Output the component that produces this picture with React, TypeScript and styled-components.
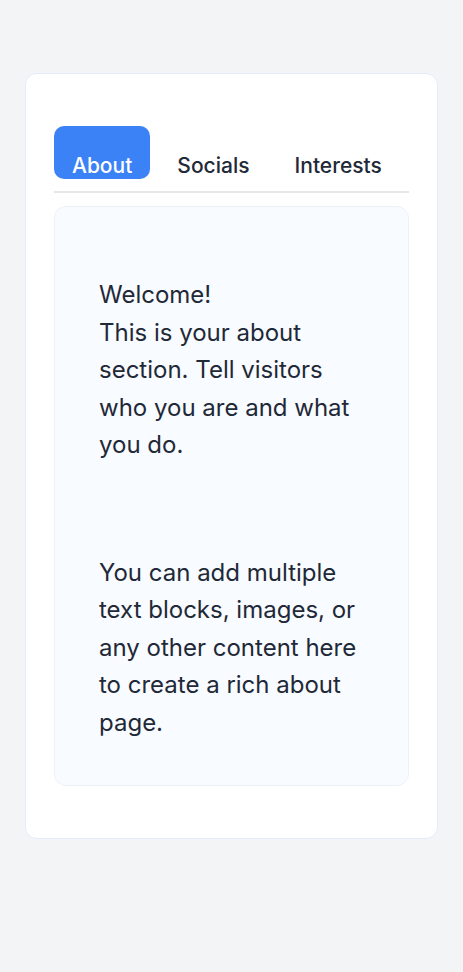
import React, { useState } from "react"
import styled, { createGlobalStyle } from "styled-components"

const GlobalStyle = createGlobalStyle`
  html, body {
    margin: 0;
    padding: 0;
    background: #f3f4f6;
    font-family: Inter, "Noto Sans", sans-serif;
    color: #1f2937;
  }
`

const tabs = ["About", "Socials", "Interests"]

const App = () => {
  const [active, setActive] = useState("About")

  return (
    <>
      <GlobalStyle />
      <Page>
        <Card>
          <TabBar>
            {tabs.map(t => (
              <Tab key={t} $active={t === active} onClick={() => setActive(t)}>
                {t}
              </Tab>
            ))}
          </TabBar>
          <Panel>
            <Para>
              Welcome!
              <br />
              This is your about section. Tell visitors who you are and what you do.
            </Para>
            <Para>
              You can add multiple text blocks, images, or any other content here to create a rich
              about page.
            </Para>
          </Panel>
        </Card>
      </Page>
    </>
  )
}

const Page = styled.main`
  min-height: 972px;
  padding: 73px 25px 0 25px;
  box-sizing: border-box;
`

const Card = styled.section`
  width: 413px;
  box-sizing: border-box;
  background: #ffffff;
  border: 1px solid #e3ebfb;
  border-radius: 12px;
  padding: 52px 28px 52px 28px;
`

const TabBar = styled.div`
  display: flex;
  gap: 9px;
  border-bottom: 2px solid #e5e7eb;
  padding-bottom: 12px;
`

const Tab = styled.button<{ $active: boolean }>`
  border: none;
  cursor: pointer;
  font-family: Inter, "Noto Sans", sans-serif;
  font-size: 21px;
  font-weight: 500;
  line-height: 24px;
  padding: 28px 18px 1px 18px;
  border-radius: 10px;
  background: ${p => (p.$active ? "#3b82f6" : "transparent")};
  color: ${p => (p.$active ? "#ffffff" : "#1f2937")};
`

const Panel = styled.div`
  margin-top: 13px;
  background: #f8fbff;
  border: 1px solid #eef1f5;
  border-radius: 12px;
  padding: 44px 44px 44px 44px;
`

const Para = styled.p`
  margin: 25px 0 90px 0;
  font-size: 24px;
  line-height: 37.5px;
  &:last-child {
    margin-bottom: 0;
  }
`

export default App
